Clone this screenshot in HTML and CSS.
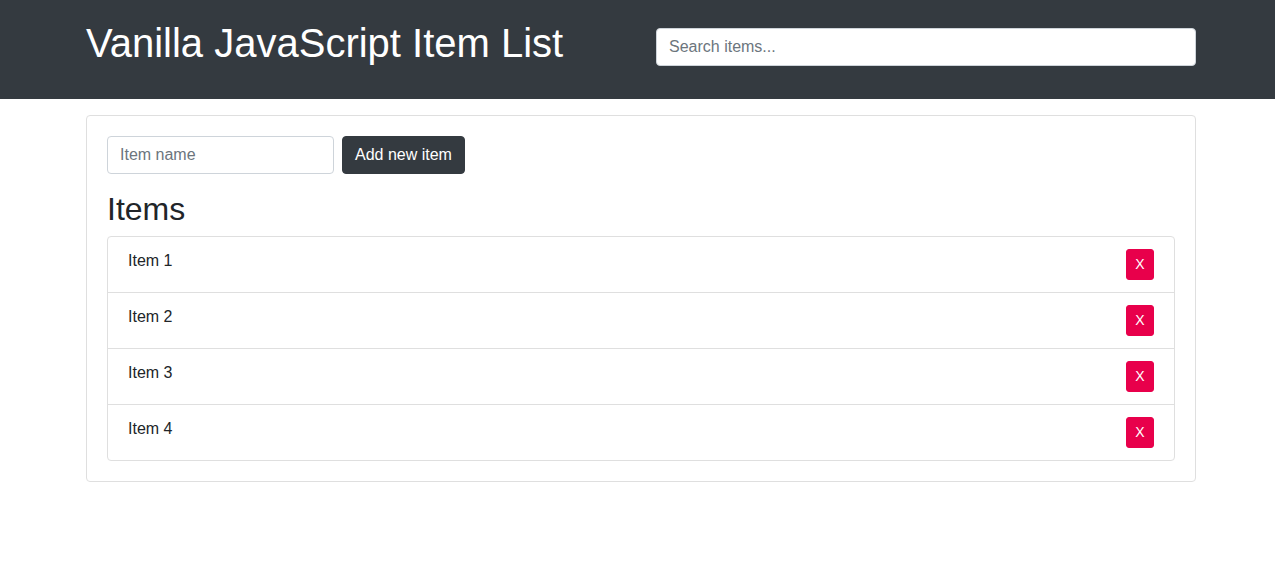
FILE: index.html
```html
<!DOCTYPE html>
<html lang="en">
<head>
<meta charset="utf-8">
<title>Item Lister</title>
<link rel="stylesheet" href="styles.css">
</head>
<body>
<header class="header">
  <div class="container header-row">
    <div class="col">
      <h1 class="title">Vanilla JavaScript Item List</h1>
    </div>
    <div class="col">
      <input type="text" class="form-control search" placeholder="Search items...">
    </div>
  </div>
</header>
<div class="container">
  <div class="card">
    <form class="add-form">
      <input type="text" class="form-control item-input" placeholder="Item name">
      <button type="button" class="btn btn-dark">Add new item</button>
    </form>
    <h2 class="items-title">Items</h2>
    <ul class="list-group">
      <li class="list-group-item"><span>Item 1</span><button type="button" class="btn-del">X</button></li>
      <li class="list-group-item"><span>Item 2</span><button type="button" class="btn-del">X</button></li>
      <li class="list-group-item"><span>Item 3</span><button type="button" class="btn-del">X</button></li>
      <li class="list-group-item"><span>Item 4</span><button type="button" class="btn-del">X</button></li>
    </ul>
  </div>
</div>
</body>
</html>
```
FILE: styles.css
```css
* { box-sizing: border-box; }
html, body {
  margin: 0;
  padding: 0;
}
body {
  font-family: "Liberation Sans", Arial, sans-serif;
  font-size: 16px;
  line-height: 1.5;
  color: #212529;
  background: #fff;
}
.container {
  width: 1110px;
  margin-left: calc(50% - 551.5px);
}
.header {
  background: #343a40;
  padding: 19px 0 24px;
}
.header-row {
  display: flex;
  gap: 30px;
}
.col {
  flex: 1 1 0;
  min-width: 0;
}
.title {
  margin: 0 0 8px;
  font-size: 40px;
  font-weight: 400;
  line-height: 1.2;
  color: #fff;
}
.form-control {
  display: block;
  height: 38px;
  padding: 6px 12px;
  font-family: inherit;
  font-size: 16px;
  line-height: 1.5;
  color: #495057;
  background: #fff;
  border: 1px solid #ced4da;
  border-radius: 4px;
  outline: none;
}
.form-control::placeholder { color: #6c757d; opacity: 1; }
.search {
  width: 100%;
  margin-top: 9px;
}
.card {
  margin-top: 16px;
  border: 1px solid #dfdfdf;
  border-radius: 4px;
  padding: 20px;
}
.add-form {
  display: flex;
  gap: 8px;
  margin: 0 0 16px;
}
.item-input {
  width: 227px;
}
.btn {
  font-family: inherit;
  font-size: 16px;
  line-height: 1.5;
  padding: 6px 12px;
  border: 1px solid transparent;
  border-radius: 4px;
  cursor: pointer;
}
.btn-dark {
  background: #343a40;
  border-color: #343a40;
  color: #fff;
}
.items-title {
  margin: 0 0 8px;
  font-size: 32px;
  font-weight: 400;
  line-height: 1.2;
}
.list-group {
  list-style: none;
  margin: 0;
  padding: 0;
}
.list-group-item {
  display: flex;
  justify-content: space-between;
  align-items: flex-start;
  padding: 12px 20px;
  border: 1px solid #dfdfdf;
  margin-bottom: -1px;
}
.list-group-item:first-child {
  border-top-left-radius: 4px;
  border-top-right-radius: 4px;
}
.list-group-item:last-child {
  margin-bottom: 0;
  border-bottom-left-radius: 4px;
  border-bottom-right-radius: 4px;
}
.btn-del {
  width: 28px;
  height: 31px;
  padding: 0;
  font-family: inherit;
  font-size: 14px;
  line-height: 1.5;
  color: #fff;
  background: #e8004b;
  border: 1px solid #e8004b;
  border-radius: 3px;
  cursor: pointer;
}
```
